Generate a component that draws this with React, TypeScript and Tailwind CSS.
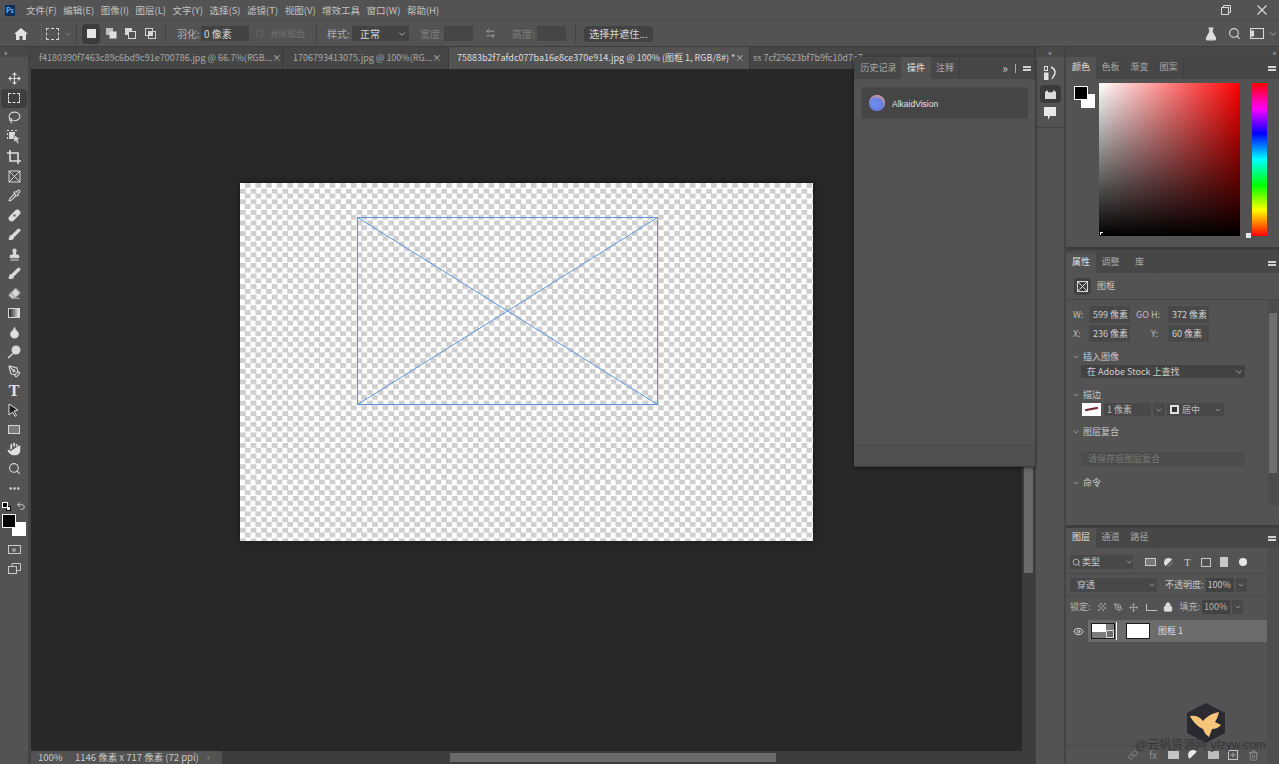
import { Brush, Droplet, Eraser, FlaskConical, Hand, Lasso, Move, PenTool, Pipette, Search, Stamp, ChevronDown, ArrowLeftRight, Eye, Lock, Link, Trash2, Plus, Undo2, MoreHorizontal } from 'lucide-react'
import type { ReactNode } from 'react'

const font = "font-['Noto_Sans_CJK_SC','Liberation_Sans',sans-serif]"

function Chevron({ className = '' }: { className?: string }) {
  return <ChevronDown className={`h-2.5 w-2.5 shrink-0 text-[#b5b5b5] ${className}`} />
}

function Menu() {
  const items = ['文件(F)', '编辑(E)', '图像(I)', '图层(L)', '文字(Y)', '选择(S)', '滤镜(T)', '视图(V)', '增效工具', '窗口(W)', '帮助(H)']
  return (
    <div className="flex h-[21px] items-center border-b border-[#484848] pl-[5px] pr-[12px]">
      <div className="mr-[11px] flex h-[11px] w-[10px] items-center justify-center bg-[#0c2f5c] text-[7px] font-bold leading-none text-[#5cb8f5]">Ps</div>
      <div className="flex gap-[6.500px] text-[9.500px] text-[#c4c4c4]">
        {items.map((m) => (
          <span key={m} className="whitespace-nowrap">{m}</span>
        ))}
      </div>
      <div className="ml-auto flex items-center gap-[26px]">
        <svg width="10" height="10" viewBox="0 0 10 10" fill="none" stroke="#d8d8d8">
          <rect x="0.5" y="2.5" width="7" height="7" />
          <path d="M2.5 2.5v-2h7v7h-2" />
        </svg>
        <svg width="10" height="10" viewBox="0 0 10 10" fill="none" stroke="#d8d8d8" strokeWidth="1.2">
          <path d="M0.5 0.5l9 9M9.5 0.5l-9 9" />
        </svg>
      </div>
    </div>
  )
}

function ModeIcon({ kind }: { kind: number }) {
  return (
    <svg width="11" height="11" viewBox="0 0 11 11">
      {kind === 0 && <rect x="1" y="1" width="9" height="9" fill="#e6e6e6" />}
      {kind === 1 && (
        <>
          <rect x="0" y="0" width="7" height="7" fill="#bdbdbd" />
          <rect x="3.5" y="3.5" width="7" height="7" fill="#e0e0e0" />
        </>
      )}
      {kind === 2 && (
        <>
          <rect x="0" y="0" width="7" height="7" fill="#d8d8d8" />
          <rect x="3.5" y="3.5" width="7" height="7" fill="#535353" stroke="#d8d8d8" />
        </>
      )}
      {kind === 3 && (
        <>
          <rect x="0.5" y="0.5" width="7" height="7" fill="none" stroke="#d0d0d0" />
          <rect x="3.5" y="3.5" width="7" height="7" fill="none" stroke="#d0d0d0" />
          <rect x="3.5" y="3.5" width="4" height="4" fill="#d8d8d8" />
        </>
      )}
    </svg>
  )
}

function Options() {
  return (
    <div className="flex h-[26px] items-center border-b border-[#3c3c3c] text-[10px] text-[#b0b0b0]">
      <svg className="ml-[14px]" width="14" height="12" viewBox="0 0 14 12" fill="#e2e2e2">
        <path d="M7 0L0 6h2v6h3.5V8h3v4H12V6h2z" />
      </svg>
      <div className="ml-[13px] h-[20px] border-l border-dotted border-[#6a6a6a]" />
      <div className="ml-[4px] h-[12px] w-[13px] border border-dashed border-[#d8d8d8]" />
      <Chevron className="ml-[4px] opacity-50" />
      <div className="ml-[3px] h-[20px] border-l border-[#444]" />
      <div className="ml-[5px] flex h-[20px] w-[18px] items-center justify-center rounded-sm bg-[#3c3c3c]"><ModeIcon kind={0} /></div>
      <div className="ml-[4px] flex w-[14px] justify-center"><ModeIcon kind={1} /></div>
      <div className="ml-[5px] flex w-[14px] justify-center"><ModeIcon kind={2} /></div>
      <div className="ml-[6px] flex w-[14px] justify-center"><ModeIcon kind={3} /></div>
      <div className="ml-[8px] h-[20px] border-l border-[#444]" />
      <span className="ml-[11px] w-[24px] whitespace-nowrap">羽化:</span>
      <div className="flex h-[15px] w-[48px] items-center bg-[#434343] pl-[3px] text-[#d8d8d8]">0 像素</div>
      <div className="ml-[7px] h-[7px] w-[7px] border border-[#606060]" />
      <span className="ml-[6px] w-[40px] whitespace-nowrap text-[9px] text-[#727272]">消除锯齿</span>
      <div className="ml-[7px] h-[20px] border-l border-[#444]" />
      <span className="ml-[10px] w-[25px] whitespace-nowrap">样式:</span>
      <div className="flex h-[15px] w-[57px] items-center justify-between bg-[#434343] pl-[8px] pr-[2px] text-[#d8d8d8]">正常<Chevron /></div>
      <span className="ml-[11px] w-[24px] whitespace-nowrap text-[#7c7c7c]">宽度:</span>
      <div className="h-[15px] w-[29px] bg-[#464646]" />
      <ArrowLeftRight className="ml-[12px] h-[11px] w-[11px] text-[#a0a0a0]" />
      <span className="ml-[16px] w-[25px] whitespace-nowrap text-[#7c7c7c]">高度:</span>
      <div className="h-[15px] w-[29px] bg-[#464646]" />
      <div className="ml-[9px] h-[20px] border-l border-[#444]" />
      <div className="ml-[8px] flex h-[16px] w-[69px] items-center justify-center rounded-sm bg-[#424242] text-[#d8d8d8]">选择并遮住...</div>
      <div className="ml-auto flex items-center text-[#dcdcdc]">
        <FlaskConical className="h-[14px] w-[14px]" fill="#dcdcdc" />
        <Search className="ml-[10px] h-[13px] w-[13px]" />
        <svg className="ml-[9px]" width="14" height="11" viewBox="0 0 14 11" fill="none" stroke="#dcdcdc">
          <rect x="0.5" y="0.5" width="13" height="10" />
          <path d="M1 2.5h3v6H1z" fill="#dcdcdc" stroke="none" />
        </svg>
        <Chevron className="ml-[4px] mr-[1px]" />
      </div>
    </div>
  )
}

function ObjectSelect() {
  return (
    <svg width="14" height="14" viewBox="0 0 14 14" fill="#d8d8d8">
      <path d="M0 0h2v1H0zM4 0h2v1H4zM8 0h2v1H8zM0 3h1v2H0zM0 7h1v2H0z" />
      <rect x="2" y="2" width="6" height="7" />
      <path d="M7 5l6 4-2.5.7L12 13l-1.500.7-1.500-3-2 1.500z" stroke="#535353" strokeWidth="0.5" />
    </svg>
  )
}

function Healing() {
  return (
    <svg width="15" height="15" viewBox="0 0 15 15">
      <rect x="0.5" y="4.500" width="14" height="6" rx="3" transform="rotate(-45 7.500 7.500)" fill="#dcdcdc" />
      <path d="M6.500 6.500h2v2h-2z" fill="#535353" />
    </svg>
  )
}

function Tools() {
  const ic = 'h-[13px] w-[13px]'
  const tools: ReactNode[] = [
    <Move className={ic} />,
    <div className="h-[10px] w-[12px] border border-dashed border-[#e0e0e0]" />,
    <Lasso className={ic} />,
    <ObjectSelect />,
    <svg width="14" height="14" viewBox="0 0 14 14" fill="none" stroke="#e0e0e0" strokeWidth="1.6"><path d="M3 0v11h11M0 3h11v11" /></svg>,
    <svg width="13" height="13" viewBox="0 0 13 13" fill="none" stroke="#d8d8d8"><rect x="1" y="1" width="11" height="11" /><path d="M1 1l11 11M12 1L1 12" /></svg>,
    <Pipette className={ic} />,
    <Healing />,
    <Brush className={ic} fill="#d8d8d8" />,
    <Stamp className={ic} fill="#d8d8d8" />,
    <Brush className={ic} fill="#d8d8d8" />,
    <Eraser className={ic} fill="#d8d8d8" stroke="#9a9a9a" />,
    <div className="h-[10px] w-[12px] border border-[#d8d8d8] bg-gradient-to-r from-[#2d2d2d] to-[#e8e8e8]" />,
    <Droplet className={ic} fill="#e0e0e0" />,
    <svg width="14" height="14" viewBox="0 0 14 14" fill="#d8d8d8"><circle cx="9" cy="5" r="4.500" /><path d="M6 8.500L1 13" stroke="#d8d8d8" strokeWidth="1.500" /></svg>,
    <PenTool className={ic} />,
    <span className="font-['Liberation_Serif',serif] text-[16px] font-bold leading-none text-[#e4e4e4]">T</span>,
    <svg width="12" height="14" viewBox="0 0 12 14" fill="#1c1c1c" stroke="#e0e0e0"><path d="M1 1l9 6-4 1 2.500 4.500-1.500.8L4.500 9 1 12z" /></svg>,
    <div className="h-[9px] w-[12px] border border-[#d8d8d8] bg-[#7a7a7a]" />,
    <Hand className="h-[16px] w-[16px]" fill="#e0e0e0" stroke="#535353" strokeWidth={1.2} />,
    <Search className={ic} />,
    <MoreHorizontal className="h-[13px] w-[13px]" strokeWidth={3} />,
  ]
  return (
    <div className="flex h-full w-[31px] shrink-0 flex-col items-center border-r-[3px] border-[#444] text-[#d8d8d8]">
      <div className="flex h-[10px] w-full items-center bg-[#484848] pl-[4px] text-[7px] leading-none text-[#c8c8c8]">»</div>
      <div className="mt-[12px] flex flex-col">
        {tools.map((t, i) => (
          <div key={i} className={`flex h-[19.5px] w-[26px] items-center justify-center ${i === 1 ? 'rounded-sm bg-[#3e3e3e]' : ''}`}>{t}</div>
        ))}
      </div>
      <div className="mt-[3px] flex w-[26px] items-center justify-between px-[1px]">
        <div className="relative h-[9px] w-[9px]">
          <div className="absolute bottom-0 right-0 h-[5px] w-[5px] border border-black bg-white" />
          <div className="absolute left-0 top-0 h-[6px] w-[6px] border border-white bg-black" />
        </div>
        <Undo2 className="h-[10px] w-[10px]" />
      </div>
      <div className="relative mt-[3px] h-[22px] w-[24px]">
        <div className="absolute bottom-0 right-0 h-[14px] w-[14px] bg-white" />
        <div className="absolute left-0 top-0 h-[14px] w-[14px] border border-white bg-black" />
      </div>
      <div className="mt-[4px] flex h-[19px] items-center"><div className="flex h-[9px] w-[13px] items-center justify-center border border-[#c8c8c8]"><div className="h-[4px] w-[4px] rounded-full bg-[#9a9a9a]" /></div></div>
      <div className="flex h-[19px] items-center">
        <svg width="13" height="11" viewBox="0 0 13 11" fill="none" stroke="#c8c8c8"><rect x="0.5" y="3.500" width="8" height="7" /><path d="M4 3.500v-3h8.500v7H8.500" /></svg>
      </div>
    </div>
  )
}

function Tabs() {
  const tabs = [
    { t: 'f4180390f7463c89c6bd9c91e700786.jpg @ 66.7%(RGB...', w: 'w-[252px] pl-[8px] pr-[6px]', x: true },
    { t: '1706793413075.jpg @ 100%(RG...', w: 'w-[166px] pl-[10px] pr-[8px]', x: true },
    { t: '75883b2f7afdc077ba16e8ce370e914.jpg @ 100% (图框 1, RGB/8#) *', w: 'w-[301px] pl-[8px] pr-[12px]', x: true, on: true },
    { t: 'ss 7cf25623bf7b9fc10d7c7', w: 'w-[285px] pl-[3px] pr-[8px]', x: false },
  ]
  return (
    <div className="flex h-[22px] shrink-0 overflow-hidden bg-[#3f3f3f] text-[9px]">
      {tabs.map((x) => (
        <div key={x.t} className={`flex shrink-0 items-center justify-between border-r border-[#3a3a3a] ${x.w} ${x.on ? 'bg-[#535353] text-[#dedede]' : 'bg-[#464646] text-[#a8a8a8]'}`}>
          <span className="whitespace-nowrap">{x.t}</span>
          {x.x && <span className="text-[9px] text-[#c0c0c0]">×</span>}
        </div>
      ))}
    </div>
  )
}

function Artboard() {
  return (
    <div className="relative h-[358px] w-[573px] bg-white bg-[conic-gradient(#cfcfcf_25%,#ffffff_0_50%,#cfcfcf_0_75%,#ffffff_0)] bg-[length:10.600px_10.600px] shadow-[0_0_6px_rgba(0,0,0,0.5)]">
      <svg className="absolute left-[117px] top-[34px]" width="301" height="188" viewBox="0 0 301 188" fill="none" stroke="#5a96e0">
        <rect x="0.5" y="0.5" width="300" height="187" />
        <path d="M0.5 0.5l300 187M300.500 0.500l-300 187" />
      </svg>
    </div>
  )
}

function FloatPanel() {
  return (
    <div className="absolute left-[823px] top-[-12px] flex h-[410px] w-[181px] flex-col border-b border-[#3a3a3a] bg-[#535353] text-[9px] shadow-[0_1px_4px_rgba(0,0,0,0.5)]">
      <div className="flex h-[22px] items-stretch bg-[#474747] text-[#a8a8a8]">
        <div className="flex w-[47px] items-center justify-center pl-[2px]">历史记录</div>
        <div className="flex w-[30px] items-center justify-center bg-[#535353] text-[#e0e0e0]">操件</div>
        <div className="flex w-[29px] items-center justify-center border-r border-[#3f3f3f]">注释</div>
        <div className="ml-auto flex items-center gap-[7px] pr-[4px] text-[#c8c8c8]">
          <span className="text-[12px] leading-none">»</span>
          <div className="h-[9px] border-l border-[#aaa]" />
          <Bars />
        </div>
      </div>
      <div className="mx-[7px] mt-[8px] flex h-[32px] items-center gap-[7px] border border-[#4a4a4a] bg-[#464646] pl-[7px] text-[8.500px] text-[#e4e4e4]">
        <div className="h-[16px] w-[16px] rounded-full bg-[radial-gradient(circle_at_35%_55%,#6f8ff0,#5b6fd8)] shadow-[inset_-1px_2px_2px_rgba(255,170,120,0.7)]" />
        <span className="pt-[2px] font-['Liberation_Sans',sans-serif]">AlkaidVision</span>
      </div>
      <div className="mt-auto h-[21px] border-t border-[#484848] bg-[#505050]" />
    </div>
  )
}

function Bars() {
  return (
    <div className="flex flex-col gap-[1px]">
      <div className="h-[2px] w-[8px] bg-[#d0d0d0]" />
      <div className="h-[2px] w-[8px] bg-[#d0d0d0]" />
    </div>
  )
}

function PanelTabs({ tabs, h = 'h-[20px]' }: { tabs: string[]; h?: string }) {
  return (
    <div className={`flex shrink-0 items-stretch bg-[#474747] text-[9px] text-[#a8a8a8] ${h}`}>
      {tabs.map((t, i) => (
        <div key={t} className={`flex items-center justify-center pb-[2px] ${i === 0 ? 'w-[30px] bg-[#535353] text-[#e0e0e0]' : 'w-[29px]'}`}>{t}</div>
      ))}
      <div className="w-[1px] bg-[#404040]" />
      <div className="ml-auto flex items-center pr-[3px]"><Bars /></div>
    </div>
  )
}

function Color() {
  return (
    <div className="h-[200px] shrink-0">
      <div className="flex h-[10px] items-center justify-end bg-[#484848] pr-[3px] text-[7px] leading-none text-[#c8c8c8]">»</div>
      <PanelTabs tabs={['颜色', '色板', '渐变', '图案']} h="h-[22px]" />
      <div className="flex pl-[8px] pt-[4px]">
        <div className="relative mt-[3px] h-[22px] w-[25px]">
          <div className="absolute bottom-0 right-[4px] h-[14px] w-[14px] bg-white" />
          <div className="absolute left-0 top-0 h-[14px] w-[14px] border border-white bg-black" />
        </div>
        <div className="relative h-[153px] w-[141px] bg-[linear-gradient(to_top,#000,transparent),linear-gradient(to_right,#fff,#ff0000)]">
          <div className="absolute bottom-[1px] left-[1px] h-[3px] w-[3px] border-l border-t border-white" />
        </div>
        <div className="relative ml-[12px] h-[153px] w-[15px] bg-[linear-gradient(to_bottom,#f00,#f0f_17%,#00f_33%,#0ff_50%,#0f0_67%,#ff0_83%,#f00)]">
          <div className="absolute -bottom-[2px] -left-[6px] h-[5px] w-[5px] bg-[#e8e8e8]" />
        </div>
      </div>
    </div>
  )
}

function NumField({ v }: { v: string }) {
  return <div className="flex h-[17px] w-[41px] items-center border border-[#4a4a4a] bg-[#484848] pl-[3px] text-[#cfcfcf]">{v}</div>
}

function Section({ t }: { t: string }) {
  return (
    <div className="flex h-[13px] items-center gap-[3px] pl-[6px] text-[#c8c8c8]">
      <Chevron className="h-[8px] w-[8px]" />
      <span>{t}</span>
    </div>
  )
}

function Properties() {
  return (
    <div className="flex h-[281px] shrink-0 flex-col border-b-[3px] border-[#3d3d3d]">
      <div className="h-[6px] shrink-0 border-t-[3px] border-[#3d3d3d] bg-[#484848]" />
      <PanelTabs tabs={['属性', '调整', '库']} />
      <div className="flex h-[27px] shrink-0 items-center gap-[3px] border-b border-[#444] pl-[8px] text-[9px] text-[#c8c8c8]">
        <div className="flex h-[17px] w-[17px] items-center justify-center rounded-sm bg-[#3f3f3f]">
          <svg width="11" height="11" viewBox="0 0 11 11" fill="none" stroke="#d8d8d8"><rect x="0.5" y="0.5" width="10" height="10" /><path d="M0.5 0.5l10 10M10.500 0.500l-10 10" /></svg>
        </div>
        <span className="ml-[3px]">图框</span>
      </div>
      <div className="flex min-h-0 flex-1">
        <div className="min-w-0 flex-1 pt-[6px] text-[9px] text-[#bdbdbd]">
          <div className="flex items-center pl-[7px]">
            <span className="w-[16px]">W:</span><NumField v="599 像素" />
            <span className="ml-[6px] w-[32px] whitespace-nowrap">GO H:</span><NumField v="372 像素" />
          </div>
          <div className="mt-[2px] flex items-center pl-[7px]">
            <span className="w-[16px]">X:</span><NumField v="236 像素" />
            <span className="ml-[6px] w-[32px] pl-[15px]">Y:</span><NumField v="60 像素" />
          </div>
          <div className="mt-[8px]"><Section t="插入图像" /></div>
          <div className="ml-[15px] mt-[2px] flex h-[13px] w-[164px] items-center justify-between bg-[#424242] pl-[6px] pr-[1px] text-[#d0d0d0]">
            在 Adobe Stock 上查找<Chevron />
          </div>
          <div className="mt-[10px]"><Section t="描边" /></div>
          <div className="ml-[16px] mt-[2px] flex h-[13px] items-center">
            <div className="relative h-[13px] w-[19px] overflow-hidden bg-white">
              <div className="absolute left-[3px] top-[5px] h-[2px] w-[13px] -rotate-12 bg-[#7a1f2f]" />
            </div>
            <div className="ml-[3px] flex h-[13px] w-[47px] items-center bg-[#484848] pl-[3px]">1 像素</div>
            <div className="ml-[2px] flex h-[13px] w-[12px] items-center justify-center bg-[#484848]"><Chevron className="h-[8px] w-[8px]" /></div>
            <div className="ml-[2px] flex h-[13px] w-[57px] items-center bg-[#484848] pl-[3px]">
              <div className="mr-[3px] h-[9px] w-[9px] border-2 border-[#e0e0e0] bg-[#333]" />居中<Chevron className="ml-auto mr-[2px] h-[8px] w-[8px]" />
            </div>
          </div>
          <div className="mt-[9px]"><Section t="图层复合" /></div>
          <div className="ml-[15px] mt-[14px] flex h-[14px] w-[164px] items-center bg-[#4c4c4c] pl-[7px] text-[#7a7a7a]">请保存后图层复合</div>
          <div className="mt-[10px]"><Section t="命令" /></div>
        </div>
        <div className="flex h-[205px] w-[11px] flex-col bg-[#4c4c4c] px-[1px] pt-[13px]">
          <div className="h-[160px] w-[8px] bg-[#6e6e6e]" />
        </div>
      </div>
    </div>
  )
}

function LayerIcons() {
  return (
    <div className="ml-[8px] flex items-center text-[#c8c8c8] [&>div]:flex [&>div]:w-[18.500px] [&>div]:justify-center">
      <div><div className="h-[8px] w-[11px] border border-[#c8c8c8] bg-[#777]" /></div>
      <div><div className="h-[9px] w-[9px] rounded-full bg-[linear-gradient(135deg,#dcdcdc_50%,#666_50%)]" /></div>
      <div><span className="font-['Liberation_Serif',serif] text-[11px] leading-none">T</span></div>
      <div><div className="h-[9px] w-[10px] border border-[#c8c8c8]" /></div>
      <div><div className="h-[10px] w-[8px] bg-[#c8c8c8]" /></div>
      <div><div className="h-[8px] w-[8px] rounded-full bg-[#e8e8e8]" /></div>
    </div>
  )
}

function Layers() {
  return (
    <div className="relative flex min-h-0 flex-1 flex-col text-[9px]">
      <PanelTabs tabs={['图层', '通道', '路径']} />
      <div className="flex h-[26px] shrink-0 items-center border-b border-[#484848] pl-[4px] pt-[3px]">
        <div className="flex h-[14px] w-[63px] items-center bg-[#484848] pl-[2px] text-[#c8c8c8]">
          <Search className="mr-[1px] h-[9px] w-[9px]" />类型<Chevron className="ml-auto h-[8px] w-[8px]" />
        </div>
        <LayerIcons />
      </div>
      <div className="flex h-[23px] shrink-0 items-center border-b border-[#484848] pl-[4px] text-[#c8c8c8]">
        <div className="flex h-[14px] w-[87px] items-center justify-between bg-[#484848] pl-[7px] pr-[1px]">穿透<Chevron className="h-[8px] w-[8px]" /></div>
        <span className="ml-[8px] text-[9px]">不透明度:</span>
        <div className="ml-[2px] flex h-[14px] w-[28px] items-center bg-[#424242] pl-[2px]">100%</div>
        <div className="ml-[2px] flex h-[14px] w-[11px] items-center justify-center bg-[#484848]"><Chevron className="h-[8px] w-[8px]" /></div>
      </div>
      <div className="flex h-[23px] shrink-0 items-center pb-[3px] pl-[4px] text-[#b5b5b5]">
        <span>锁定:</span>
        <div className="ml-[7px] h-[8px] w-[8px] bg-[conic-gradient(#888_25%,#555_0_50%,#888_0_75%,#555_0)] bg-[length:4px_4px]" />
        <PenTool className="ml-[8px] h-[9px] w-[9px]" />
        <Move className="ml-[6px] h-[9px] w-[9px]" />
        <div className="ml-[8px] h-[7px] w-[11px] border-b border-l border-[#c0c0c0]" />
        <Lock className="ml-[6px] h-[10px] w-[10px] text-[#dedede]" fill="#dedede" />
        <span className="ml-[7px] text-[9px]">填充:</span>
        <div className="ml-[2px] flex h-[14px] w-[28px] items-center bg-[#424242] pl-[2px]">100%</div>
        <div className="ml-[2px] flex h-[14px] w-[11px] items-center justify-center bg-[#484848]"><Chevron className="h-[8px] w-[8px]" /></div>
      </div>
      <div className="flex h-[22px] shrink-0 items-center">
        <div className="flex w-[22px] justify-center pl-[3px]"><Eye className="h-[11px] w-[11px] text-[#e0e0e0]" /></div>
        <div className="flex h-[22px] w-[180px] items-center bg-[#6c6c6c] pl-[3px] text-[#dedede]">
          <div className="relative h-[16px] w-[24px] border border-[#1c1c1c] bg-[#7c7c7c]">
            <div className="absolute left-0 top-0 h-[8px] w-[14px] bg-white" />
            <div className="absolute bottom-0 right-0 flex h-[8px] w-[8px] items-center justify-center border border-[#ddd] bg-[#6c6c6c]" />
          </div>
          <div className="ml-[1px] h-[18px] w-[1px] bg-white" />
          <div className="ml-[9px] h-[16px] w-[24px] border border-[#1c1c1c] bg-white" />
          <span className="ml-[8px] text-[9px]">图框 1</span>
        </div>
      </div>
      <div className="absolute bottom-0 left-0 right-[12px] flex h-[19px] items-center justify-end border-t border-[#4a4a4a] pr-[4px] text-[#8f8f8f] [&>div]:flex [&>div]:w-[20px] [&>div]:justify-center">
        <div><Link className="h-[10px] w-[10px]" /></div>
        <div><span className="text-[10px] leading-none">fx</span></div>
        <div><div className="h-[8px] w-[11px] bg-[#c4c4c4]" /></div>
        <div><div className="h-[10px] w-[10px] rounded-full bg-[linear-gradient(135deg,#e8e8e8_50%,#555_50%)]" /></div>
        <div><div className="h-[8px] w-[11px] bg-[#bdbdbd]" /></div>
        <div><div className="flex h-[10px] w-[10px] items-center justify-center border border-[#c4c4c4]"><Plus className="h-[8px] w-[8px] text-[#c4c4c4]" /></div></div>
        <div><Trash2 className="h-[11px] w-[11px]" /></div>
      </div>
      <div className="absolute right-0 top-[20px] bottom-0 w-[12px] bg-[#4e4e4e]" />
      <div className="absolute bottom-[21px] left-[121px] flex h-[40px] w-[38px] items-center justify-center bg-[#2b2a30] [clip-path:polygon(50%_0,100%_25%,100%_75%,50%_100%,0_75%,0_25%)]">
        <svg width="38" height="40" viewBox="0 0 38 40" fill="#f7c67a">
          <path d="M3 13C9 12 13 14 16 18C20 13 26 10 32 9C31 13 30 16 28 19L34 22C31 25 28 26 25 26L22 34C19 32 17 29 16 26C11 24 6 19 3 13z" />
        </svg>
      </div>
      <div className="absolute bottom-[13px] left-[69px] whitespace-nowrap font-['Liberation_Sans','Noto_Sans_CJK_SC',sans-serif] text-[12px] leading-none text-[#2f2f2f] opacity-75">@云帆资源网 yfzyw.com</div>
    </div>
  )
}

export default function App() {
  return (
    <div className={`flex h-[764px] w-[1279px] flex-col overflow-hidden bg-[#535353] ${font}`}>
      <Menu />
      <Options />
      <div className="flex min-h-0 flex-1">
        <Tools />
        <div className="flex w-[1004px] shrink-0 flex-col">
          <Tabs />
          <div className="relative flex min-h-0 flex-1">
            <div className="min-w-0 flex-1 bg-[#282828] pl-[209px] pt-[114px]">
              <Artboard />
            </div>
            <div className="flex w-[13px] flex-col bg-[#3d3d3d] px-[2px] pt-[398px] pb-[12px]">
              <div className="h-[106px] w-[9px] bg-[#6a6a6a]" />
            </div>
            <FloatPanel />
          </div>
          <div className="flex h-[13px] shrink-0 items-center text-[9.500px] text-[#c8c8c8]">
            <span className="ml-[7px] w-[37px]">100%</span>
            <span className="whitespace-nowrap">1146 像素 x 717 像素 (72 ppi)</span>
            <span className="ml-[8px] text-[#9a9a9a]">›</span>
            <div className="ml-[12px] flex h-full flex-1 items-center bg-[#3d3d3d] pl-[228px]">
              <div className="h-[9px] w-[326px] bg-[#6a6a6a]" />
            </div>
          </div>
        </div>
        <div className="flex w-[30px] shrink-0 flex-col items-center border-x border-[#444]">
          <div className="flex h-[10px] w-full items-center justify-center bg-[#484848] text-[7px] leading-none text-[#c8c8c8]">«</div>
          <div className="flex h-[71px] w-full flex-col items-center gap-[3px] border-b border-[#444] pt-[7px] text-[#e0e0e0]">
            <div className="flex h-[18px] items-center">
              <svg width="13" height="14" viewBox="0 0 13 14" fill="none" stroke="#e0e0e0">
                <rect x="0.500" y="0.500" width="3" height="4" />
                <rect x="0.500" y="7" width="3.500" height="6.500" fill="#e0e0e0" />
                <path d="M7 1c5 2 5 7 2 10l-1 2" strokeWidth="1.500" />
              </svg>
            </div>
            <div className="flex h-[18px] w-[21px] items-center justify-center rounded-sm bg-[#3a3a3a]">
              <svg width="11" height="9" viewBox="0 0 10 8" fill="#dcdcdc"><path d="M0 8V2l2-2 1 2h4l1-2 2 2v6z" /></svg>
            </div>
            <svg className="mt-[1px]" width="12" height="13" viewBox="0 0 12 13" fill="#e8e8e8"><path d="M0 0h12v9H6l-2 4V9H0z" /></svg>
          </div>
        </div>
        <div className="flex min-w-0 flex-1 flex-col border-l border-[#444]">
          <Color />
          <Properties />
          <Layers />
        </div>
      </div>
    </div>
  )
}
